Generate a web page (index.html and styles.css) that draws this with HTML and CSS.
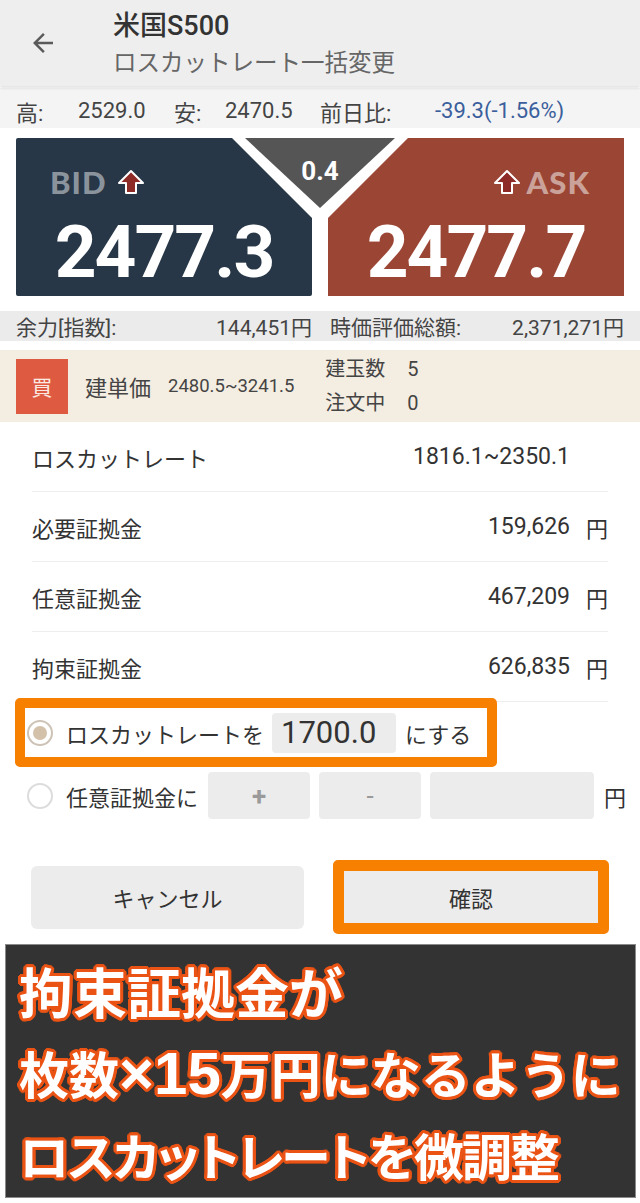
FILE: index.html
```html
<!DOCTYPE html>
<html lang="ja">
<head>
<meta charset="utf-8">
<link rel="stylesheet" href="styles.css">
</head>
<body>
<div class="page">
  <header class="appbar">
    <svg class="back" viewBox="0 0 24 24" width="30" height="30"><path d="M20 11H7.83l5.59-5.59L12 4l-8 8 8 8 1.41-1.41L7.83 13H20v-2z" fill="#5a5a5a"/></svg>
    <div class="titles">
      <div class="title">米国S500</div>
      <div class="subtitle">ロスカットレート一括変更</div>
    </div>
  </header>

  <div class="pricebar">
    <span>高:</span><span>2529.0</span><span>安:</span><span>2470.5</span><span>前日比:</span><span class="chg">-39.3(-1.56%)</span>
  </div>

  <div class="quote">
    <div class="qbox bid">
      <div class="qlabel"><span class="side">BID</span>
        <svg class="up" viewBox="0 0 28 26" width="28" height="26"><path d="M14 2 L26 14 L19 14 L19 24 L9 24 L9 14 L2 14 Z" fill="#8e2b27" stroke="#fff" stroke-width="2" stroke-linejoin="round"/></svg>
      </div>
      <div class="qprice">2477.3</div>
    </div>
    <div class="qbox ask">
      <div class="qlabel"><svg class="up" viewBox="0 0 28 26" width="28" height="26"><path d="M14 2 L26 14 L19 14 L19 24 L9 24 L9 14 L2 14 Z" fill="#8e2b27" stroke="#fff" stroke-width="2" stroke-linejoin="round"/></svg>
        <span class="side">ASK</span></div>
      <div class="qprice">2477.7</div>
    </div>
    <div class="spread"><span>0.4</span></div>
  </div>

  <div class="account">
    <div class="acell"><span>余力[指数]:</span><span>144,451円</span></div>
    <div class="acell"><span>時価評価総額:</span><span>2,371,271円</span></div>
  </div>

  <div class="position">
    <div class="badge">買</div>
    <div class="plabel">建単価</div>
    <div class="prange">2480.5~3241.5</div>
    <div class="pcounts">
      <div><span class="pk">建玉数</span><span>5</span></div>
      <div><span class="pk">注文中</span><span>0</span></div>
    </div>
  </div>

  <div class="list">
    <div class="row"><span class="lbl">ロスカットレート</span><span class="val">1816.1~2350.1</span><span class="unit"></span></div>
    <div class="row"><span class="lbl">必要証拠金</span><span class="val">159,626</span><span class="unit">円</span></div>
    <div class="row"><span class="lbl">任意証拠金</span><span class="val">467,209</span><span class="unit">円</span></div>
    <div class="row"><span class="lbl">拘束証拠金</span><span class="val">626,835</span><span class="unit">円</span></div>
  </div>

  <div class="opt opt1">
    <span class="radio on"></span>
    <span class="otext">ロスカットレートを</span>
    <span class="field rate">1700.0</span>
    <span class="otext suffix">にする</span>
  </div>
  <div class="opt opt2">
    <span class="radio"></span>
    <span class="otext">任意証拠金に</span>
    <span class="field pm">+</span>
    <span class="field pm minus">-</span>
    <span class="field amount"></span>
    <span class="otext yen">円</span>
  </div>

  <div class="actions">
    <div class="btn cancel">キャンセル</div>
    <div class="btn confirm"><span>確認</span></div>
  </div>

  <div class="banner">
    <div class="bl l1">拘束証拠金が</div>
    <div class="bl l2">枚数<span class="lat">×15</span>万円になるように</div>
    <div class="bl l3">ロスカットレートを微調整</div>
  </div>
</div>
</body>
</html>
```
FILE: styles.css
```css
* { box-sizing: border-box; }
html, body { margin: 0; padding: 0; background: #fff; }
body {
  font-family: Roboto, "Noto Sans CJK JP", sans-serif;
  color: #333;
  width: 640px;
}
.page { width: 640px; overflow: hidden; }

.appbar {
  height: 86px;
  background: #eeeeee;
  display: flex;
  align-items: center;
  padding-left: 28px;
  box-shadow: 0 2px 3px rgba(0,0,0,0.12);
  position: relative;
}
.back { flex: none; }
.titles { margin-left: 55px; display: flex; flex-direction: column; }
.title { font-size: 27px; font-weight: 500; color: #333; line-height: 34px; margin-top: 2px; }
.subtitle { font-size: 23.5px; color: #666; line-height: 32px; margin-top: 4px; }

.pricebar {
  margin-top: 2px;
  height: 40px;
  background: #f4f4f4;
  display: grid;
  grid-template-columns: 62px 96px 51px 95px 115px auto;
  align-items: center;
  padding-left: 16px;
  padding-top: 5px;
  font-size: 22px;
  color: #444;
}
.pricebar .chg { color: #3b5f9c; }

.quote {
  position: relative;
  margin: 10px 16px 0;
  height: 158px;
  display: grid;
  grid-template-columns: 296px 296px;
  column-gap: 16px;
}
.qbox { height: 158px; position: relative; display: flex; flex-direction: column; }
.bid {
  background: #273747;
  clip-path: polygon(0 0, 216px 0, 296px 80px, 296px 158px, 0 158px);
  border-radius: 2px;
}
.ask {
  background: #9b4535;
  clip-path: polygon(80px 0, 296px 0, 296px 158px, 0 158px, 0 80px);
}
.qlabel {
  height: 60px;
  margin-top: 30px;
  display: flex;
  align-items: flex-start;
  gap: 10px;
}
.bid .qlabel { padding-left: 34px; }
.ask .qlabel { justify-content: flex-end; padding-right: 34px; gap: 6px; }
.side {
  font-family: Lato, "Open Sans", sans-serif;
  font-weight: 900;
  font-size: 31px;
  line-height: 28px;
  letter-spacing: 1px;
}
.bid .side { color: #8b949d; }
.ask .side { color: #caa299; }
.up { flex: none; margin-top: 1px; }
.qprice {
  position: absolute;
  left: 0; right: 0; top: 78px;
  text-align: center;
  color: #fff;
  font-weight: 700;
  font-size: 73px;
  line-height: 72px;
  letter-spacing: -2px;
}
.spread {
  position: absolute;
  left: 229px;
  top: 0;
  width: 150px;
  height: 70px;
  background: #555555;
  clip-path: polygon(0 0, 150px 0, 75px 70px);
  display: flex;
  justify-content: center;
}
.spread span { color: #fff; font-weight: 700; font-size: 26px; margin-top: 18px; line-height: 30px; }

.account {
  margin-top: 15px;
  height: 30px;
  background: #ebebeb;
  display: grid;
  grid-template-columns: 296px 294px;
  column-gap: 18px;
  padding: 0 16px;
  align-items: center;
  font-size: 21px;
  color: #444;
}
.acell { display: flex; justify-content: space-between; }

.position {
  margin-top: 9px;
  height: 72px;
  background: #f4ede1;
  display: flex;
  align-items: center;
  padding-left: 16px;
}
.badge {
  width: 52px; height: 55px;
  background: #de5a40;
  color: #fbe9e2;
  font-size: 21px;
  display: flex; align-items: center; justify-content: center;
}
.plabel { margin-left: 17px; font-size: 22px; color: #444; }
.prange { margin-left: 17px; font-size: 18.5px; color: #444; }
.pcounts { margin-left: 31px; display: flex; flex-direction: column; font-size: 20px; color: #444; line-height: 34px; }
.pk { display: inline-block; width: 82px; }

.list { padding: 0 32px; }
.row {
  height: 70px;
  border-bottom: 1px solid #eeeeee;
  display: flex;
  align-items: center;
  font-size: 22px;
  color: #333;
}
.row .lbl { flex: 1; }
.row .val { font-size: 23px; color: #333; }
.row .unit { width: 38px; text-align: right; }

.opt { display: flex; align-items: center; font-size: 22px; color: #333; }
.opt1 {
  margin: -4px 0 0 15px;
  width: 482px;
  height: 69px;
  border: 10px solid #f78000;
  border-radius: 5px;
  background: #fff;
  position: relative;
}
.radio {
  width: 26px; height: 26px;
  border-radius: 50%;
  border: 2px solid #dcdcdc;
  flex: none;
  background: #fff;
  position: relative;
}
.opt1 .radio { margin-left: 2px; border-color: #cdc3b6; }
.radio.on::after {
  content: "";
  position: absolute;
  left: 4px; top: 4px;
  width: 14px; height: 14px;
  border-radius: 50%;
  background: #d3c1a9;
}
.otext { margin-left: 13px; }
.field {
  background: #ececec;
  border-radius: 4px;
  flex: none;
  display: flex;
  align-items: center;
}
.rate { margin-left: 8px; width: 124px; height: 40px; font-size: 31px; padding-left: 9px; color: #333; }
.suffix { margin-left: 9px; }
.opt2 { margin-top: 5px; height: 47px; padding-left: 27px; }
.pm { width: 102px; height: 47px; justify-content: center; color: #9a9a9a; font-weight: 700; font-size: 26px; }
.opt2 .otext + .pm { margin-left: 10px; }
.minus { margin-left: 9px; font-weight: 400; }
.amount { margin-left: 9px; width: 164px; height: 47px; }
.yen { margin-left: 10px; }

.actions {
  margin-top: 41px;
  height: 74px;
  display: flex;
  align-items: center;
}
.btn {
  display: flex; align-items: center; justify-content: center;
  background: #ececec;
  font-size: 22px;
  color: #333;
}
.cancel { margin-left: 31px; width: 273px; height: 63px; border-radius: 6px; }
.confirm {
  margin-left: 29px;
  width: 276px; height: 74px;
  border: 11px solid #f78000;
  border-radius: 5px;
}

.banner {
  margin: 10px 0 0 5px;
  width: 631px;
  height: 254px;
  background: #333333;
  border: 1px solid #8a8a8a;
  padding: 6px 0 0 13px;
}
.bl {
  font-family: "Noto Sans CJK JP", sans-serif;
  font-weight: 700;
  color: #fff;
  white-space: nowrap;
  text-shadow:
    3px 0 0 #ea5314, -3px 0 0 #ea5314, 0 3px 0 #ea5314, 0 -3px 0 #ea5314,
    2px 2px 0 #ea5314, -2px 2px 0 #ea5314, 2px -2px 0 #ea5314, -2px -2px 0 #ea5314,
    3px 1px 0 #ea5314, -3px 1px 0 #ea5314, 3px -1px 0 #ea5314, -3px -1px 0 #ea5314,
    1px 3px 0 #ea5314, -1px 3px 0 #ea5314, 1px -3px 0 #ea5314, -1px -3px 0 #ea5314;
}
.l1 { font-size: 54px; line-height: 80px; }
.l2 { font-size: 50px; line-height: 82px; }
.l3 { font-size: 50px; line-height: 78px; font-feature-settings: "palt"; letter-spacing: -2px; }
.lat { font-family: "Liberation Sans", Arial, sans-serif; font-weight: 700; font-size: 60px; }
```
